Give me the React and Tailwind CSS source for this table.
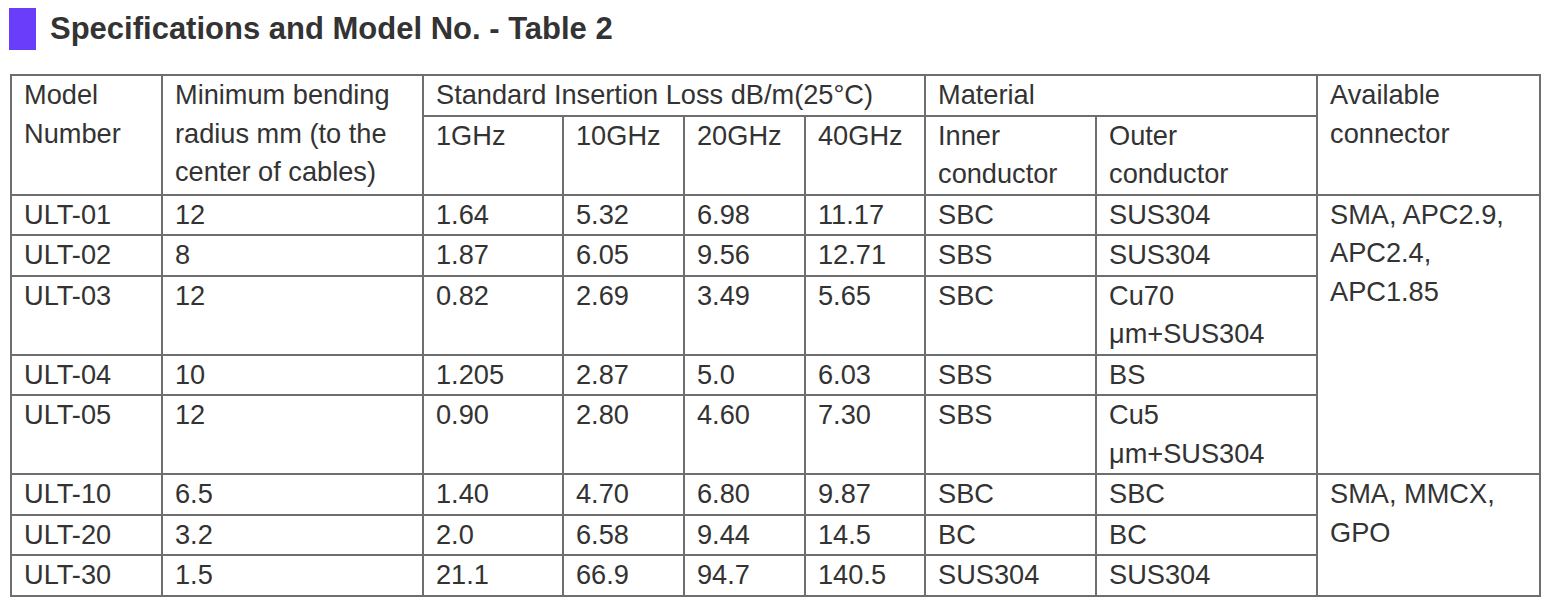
const rows = [
  ["ULT-01", "12", "1.64", "5.32", "6.98", "11.17", "SBC", "SUS304"],
  ["ULT-02", "8", "1.87", "6.05", "9.56", "12.71", "SBS", "SUS304"],
  ["ULT-03", "12", "0.82", "2.69", "3.49", "5.65", "SBC", "Cu70 μm+SUS304"],
  ["ULT-04", "10", "1.205", "2.87", "5.0", "6.03", "SBS", "BS"],
  ["ULT-05", "12", "0.90", "2.80", "4.60", "7.30", "SBS", "Cu5 μm+SUS304"],
  ["ULT-10", "6.5", "1.40", "4.70", "6.80", "9.87", "SBC", "SBC"],
  ["ULT-20", "3.2", "2.0", "6.58", "9.44", "14.5", "BC", "BC"],
  ["ULT-30", "1.5", "21.1", "66.9", "94.7", "140.5", "SUS304", "SUS304"],
];

const widths = [151, 261, 140, 121, 121, 120, 171, 221, 223];

const cell =
  "border-2 border-[#6e6e6e] pl-[12px] pr-[16px] py-0 align-top text-left font-normal leading-[38.5px]";

export default function App() {
  return (
    <div
      className="bg-white text-[#333] min-h-[614px]"
      style={{ fontFamily: '"Liberation Sans", Arial, sans-serif' }}
    >
      <div className="flex items-center pl-[9px] pt-[8px]">
        <div className="w-[27px] h-[42px] bg-[#6a3dfb]" />
        <h2 className="ml-[14px] text-[31px] font-bold leading-[42px]">
          Specifications and Model No. - Table 2
        </h2>
      </div>

      <table className="ml-[10px] mt-[24px] border-collapse table-fixed w-[1531px] text-[27.2px]">
        <colgroup>
          {widths.map((w, i) => (
            <col key={i} style={{ width: w }} />
          ))}
        </colgroup>
        <thead>
          <tr>
            <th rowSpan={2} className={cell}>
              Model Number
            </th>
            <th rowSpan={2} className={cell}>
              Minimum bending radius mm (to the center of cables)
            </th>
            <th colSpan={4} className={cell}>
              Standard Insertion Loss dB/m(25°C)
            </th>
            <th colSpan={2} className={cell}>
              Material
            </th>
            <th rowSpan={2} className={cell}>
              Available connector
            </th>
          </tr>
          <tr>
            <th className={cell}>1GHz</th>
            <th className={cell}>10GHz</th>
            <th className={cell}>20GHz</th>
            <th className={cell}>40GHz</th>
            <th className={cell}>Inner conductor</th>
            <th className={cell}>Outer conductor</th>
          </tr>
        </thead>
        <tbody>
          {rows.map((r, i) => (
            <tr key={r[0]}>
              {r.map((v, j) => (
                <td key={j} className={cell}>
                  {v}
                </td>
              ))}
              {i === 0 && (
                <td rowSpan={5} className={cell}>
                  SMA, APC2.9, APC2.4, APC1.85
                </td>
              )}
              {i === 5 && (
                <td rowSpan={3} className={cell}>
                  SMA, MMCX, GPO
                </td>
              )}
            </tr>
          ))}
        </tbody>
      </table>
    </div>
  );
}
